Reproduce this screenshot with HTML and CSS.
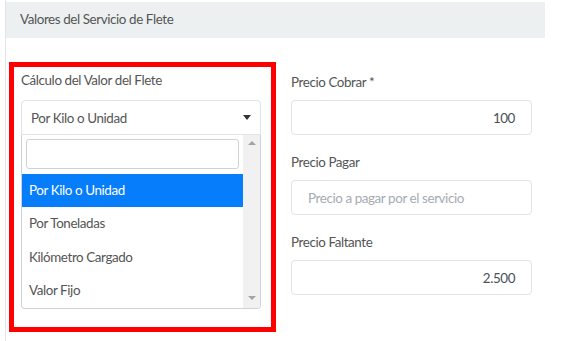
FILE: index.html
```html
<!DOCTYPE html>
<html lang="es">
<head>
<meta charset="utf-8">
<title>Valores del Servicio de Flete</title>
<link rel="stylesheet" href="styles.css">
</head>
<body>
<div class="card">
  <div class="card-header">Valores del Servicio de Flete</div>
  <div class="card-body">
    <div class="highlight">
      <div class="group">
        <label class="label">Cálculo del Valor del Flete</label>
        <div class="select">
          <span>Por Kilo o Unidad</span>
          <span class="caret"></span>
        </div>
        <div class="dropdown">
          <div class="dropdown-main">
            <div class="search"><input class="search-input" type="text"></div>
            <ul class="options">
              <li class="option active">Por Kilo o Unidad</li>
              <li class="option">Por Toneladas</li>
              <li class="option">Kilómetro Cargado</li>
              <li class="option">Valor Fijo</li>
            </ul>
          </div>
          <div class="scrollbar">
            <span class="arrow-up"></span>
            <span class="arrow-down"></span>
          </div>
        </div>
      </div>
    </div>
    <div class="col-right">
      <div class="group">
        <label class="label">Precio Cobrar *</label>
        <div class="input num">100</div>
      </div>
      <div class="group">
        <label class="label">Precio Pagar</label>
        <div class="input placeholder">Precio a pagar por el servicio</div>
      </div>
      <div class="group">
        <label class="label">Precio Faltante</label>
        <div class="input num">2.500</div>
      </div>
    </div>
  </div>
</div>
</body>
</html>
```

FILE: styles.css
```css
* { box-sizing: border-box; }
html, body { margin: 0; padding: 0; background: #fff; }
body {
  font-family: "Source Sans Pro", Lato, "Liberation Sans", sans-serif;
  font-size: 13.4px;
  letter-spacing: -0.4px;
  color: #555;
  width: 573px;
  height: 341px;
  overflow: hidden;
}
.card {
  margin-left: 5px;
  border-left: 1px solid #dfe5ec;
  height: 341px;
  padding-top: 2px;
}
.card-header {
  width: 539px;
  height: 36px;
  background: #ecf0f1;
  padding-left: 14px;
  line-height: 35px;
  color: #555;
}
.card-body {
  display: flex;
  padding-top: 24px;
}
.highlight {
  margin-left: 3px;
  width: 267px;
  height: 270px;
  border: 5px solid #ff0000;
  padding: 3px 10px 0 7px;
}
.label {
  display: block;
  line-height: 20px;
  margin-bottom: 10px;
  color: #555;
}
.select {
  height: 35px;
  border: 1px solid #dfe4e8;
  border-radius: 4px 4px 0 0;
  display: flex;
  align-items: center;
  justify-content: space-between;
  padding: 0 9px 0 9px;
  color: #555;
}
.caret {
  width: 0;
  height: 0;
  border-left: 4px solid transparent;
  border-right: 4px solid transparent;
  border-top: 5px solid #333;
}
.dropdown {
  display: flex;
  height: 174px;
  border: 1px solid #cfd3d6;
  border-top: none;
  border-radius: 0 0 4px 4px;
  overflow: hidden;
}
.dropdown-main { flex: 1; }
.search { padding: 4px 4px 5px 4px; }
.search-input {
  display: block;
  width: 100%;
  height: 30px;
  border: 1px solid #cfd3d6;
  border-radius: 3px;
  outline: none;
}
.options { list-style: none; margin: 0; padding: 0; }
.option {
  height: 33.3px;
  line-height: 33px;
  padding-left: 7px;
  color: #555;
}
.option.active { background: #067dfb; color: #fff; }
.scrollbar {
  width: 17px;
  background: #f1f1f1;
  display: flex;
  flex-direction: column;
  justify-content: space-between;
  align-items: center;
  padding: 6px 0 8px;
}
.arrow-up, .arrow-down {
  width: 0; height: 0;
  border-left: 4px solid transparent;
  border-right: 4px solid transparent;
}
.arrow-up { border-bottom: 4px solid #a3a3a3; }
.arrow-down { border-top: 4px solid #a3a3a3; }
.col-right {
  margin-left: 15px;
  width: 241px;
  padding-top: 10px;
}
.col-right .group { margin-bottom: 17px; }
.col-right .label { margin-bottom: 8px; }
.input {
  height: 35px;
  border: 1px solid #dfe4e8;
  border-radius: 4px;
  display: flex;
  align-items: center;
  padding: 0 16px;
  color: #495057;
}
.input.num { justify-content: flex-end; }
.input.placeholder { color: #a5abb1; }
```
